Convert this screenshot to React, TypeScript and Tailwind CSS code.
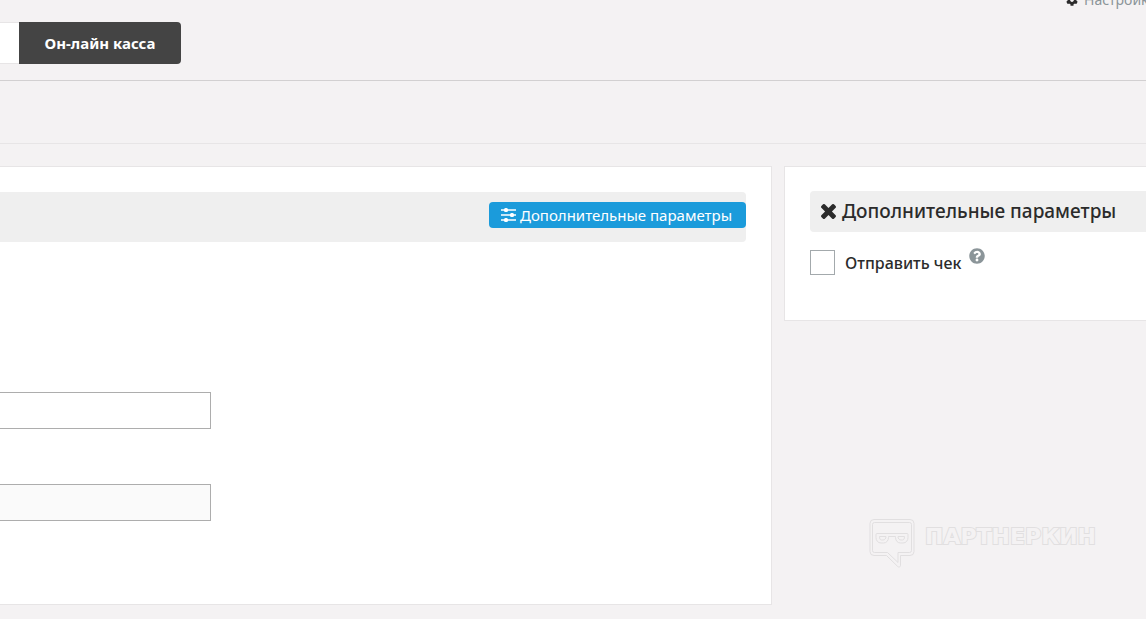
import { useState } from "react";
import { FaCog, FaQuestionCircle } from "react-icons/fa";

function SlidersIcon() {
  return (
    <svg width="15" height="14" viewBox="0 0 15 14" fill="white" aria-hidden="true">
      <path d="M0 1.200h15v1.600H0zM0 6.200h15v1.600H0zM0 11.200h15v1.600H0z" />
      <rect x="3" y="0" width="4" height="4" rx="1.5" />
      <rect x="9" y="5" width="4" height="4" rx="1.5" />
      <rect x="3" y="10" width="4" height="4" rx="1.5" />
    </svg>
  );
}

function CloseIcon() {
  return (
    <svg width="15" height="15" viewBox="302 366 1188 1188" fill="currentColor" aria-hidden="true">
      <path d="M1490 1322q0 40-28 68l-136 136q-28 28-68 28t-68-28l-294-294-294 294q-28 28-68 28t-68-28l-136-136q-28-28-28-68t28-68l294-294-294-294q-28-28-28-68t28-68l136-136q28-28 68-28t68 28l294 294 294-294q28-28 68-28t68 28l136 136q28 28 28 68t-28 68l-294 294 294 294q28 28 28 68z" />
    </svg>
  );
}

function Watermark() {
  return (
    <div className="pointer-events-none absolute right-[50px] bottom-[50px] flex items-start gap-2">
      <svg width="48" height="50" viewBox="0 0 48 50" fill="none" stroke="#e1dfe0">
        <path d="M5 .5h36a4 4 0 0 1 4 4v28a4 4 0 0 1-4 4h-9.500v10c0 1.500-2 2-3 .8L17.500 36.500H5a4 4 0 0 1-4-4v-28a4 4 0 0 1 4-4z" />
        <path d="M5.500 3.500h35a2 2 0 0 1 2 2v26a2 2 0 0 1-2 2H29v10l-10.500-10h-13a2 2 0 0 1-2-2v-26a2 2 0 0 1 2-2z" />
        <path d="M8 14.500h30a1 1 0 0 1 1 1v3c0 3-2 5.500-5 5.500h-2.500c-3 0-5-2.500-5-5.500v-1h-7v1c0 3-2 5.500-5 5.500H12c-3 0-5-2.500-5-5.500v-3a1 1 0 0 1 1-1z" />
        <path d="M10.500 17.500h6.500c0 2-1.200 3.500-3 3.500h-1.500c-1.500 0-2-1.500-2-3.500zM29 17.500h6.500c0 2-.5 3.500-2 3.500H32c-1.800 0-3-1.500-3-3.500z" />
      </svg>
      <span className="mt-0.5 font-['DejaVu_Sans',sans-serif] text-[22px] leading-8 font-bold text-[#f4f2f3] [-webkit-text-stroke:2px_#e1dfe0] [paint-order:stroke_fill]">
        ПАРТНЕРКИН
      </span>
    </div>
  );
}

export default function App() {
  const [sendReceipt, setSendReceipt] = useState(false);

  return (
    <div className="relative min-h-screen overflow-hidden bg-[#f4f2f3] font-['Noto_Sans',sans-serif] text-[#2b2b2b]">
      <header className="border-b border-[#d2d0d1] pb-4">
        {/* Enlace de ajustes */}
        <div className="-mt-3 flex h-[34px] justify-end overflow-hidden">
          <a href="#settings" className="flex w-20 items-center gap-1.5 self-start text-sm leading-6 text-[#8b9599]">
            <FaCog className="size-3 shrink-0 text-[#2b2b2b]" />
            <span>Настройки</span>
          </a>
        </div>
        <nav className="flex">
          <button type="button" aria-label="Назад" className="w-[19px] border-y border-[#e7e5e6] bg-white" />
          <button
            type="button"
            className="h-[42px] w-[162px] rounded-r bg-[#444] text-[15px] font-bold text-white"
          >
            Он-лайн касса
          </button>
        </nav>
      </header>

      <div className="h-[63px] border-b border-[#e7e5e6]" />

      <main className="mt-[22px] flex items-start gap-3">
        <section className="h-[439px] flex-1 border border-l-0 border-[#e7e5e6] bg-white py-[25px]">
          <div className="mr-[25px] flex h-[50px] items-center justify-end rounded-r bg-[#efefef]">
            <button
              type="button"
              className="mb-1 flex h-[26px] w-[257px] items-center gap-1 rounded bg-[#1b9bdb] pl-3 text-[15px] text-white"
            >
              <SlidersIcon />
              Дополнительные параметры
            </button>
          </div>
          <div className="mt-[150px] flex w-[211px] flex-col gap-[55px]">
            <input
              type="text"
              aria-label="Значение"
              className="h-[37px] border border-l-0 border-[#adadad] bg-white px-3"
            />
            <input
              type="text"
              readOnly
              aria-label="Результат"
              className="h-[37px] border border-l-0 border-[#adadad] bg-[#fafafa] px-3"
            />
          </div>
        </section>

        <aside className="w-[362px] border border-r-0 border-[#e7e5e6] bg-white pt-6 pb-[45px] pl-[25px]">
          <h2 className="flex h-[41px] items-center gap-1.5 rounded-l bg-[#efefef] pl-[11px] text-[19px] font-medium whitespace-nowrap">
            <button type="button" aria-label="Закрыть">
              <CloseIcon />
            </button>
            Дополнительные параметры
          </h2>
          <div className="mt-[18px] flex h-[25px] items-center">
            <input
              id="send-receipt"
              type="checkbox"
              checked={sendReceipt}
              onChange={(e) => setSendReceipt(e.target.checked)}
              className="size-[25px] appearance-none border border-[#a3a9ac] bg-white checked:bg-[#1b9bdb]"
            />
            <label htmlFor="send-receipt" className="ml-2.5 text-base font-medium">
              Отправить чек
            </label>
            <button type="button" aria-label="Помощь" className="mb-3.5 ml-2">
              <FaQuestionCircle className="size-4 text-[#8b9599]" />
            </button>
          </div>
        </aside>
      </main>

      <Watermark />
    </div>
  );
}
